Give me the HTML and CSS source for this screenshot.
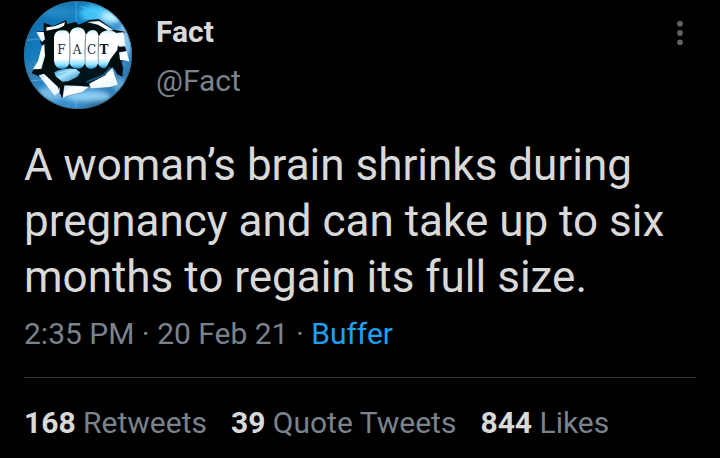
FILE: index.html
```html
<!DOCTYPE html>
<html lang="en">
<head>
<meta charset="utf-8">
<meta name="viewport" content="width=device-width, initial-scale=1">
<title>Fact</title>
<link rel="stylesheet" href="styles.css">
</head>
<body>
<article class="tweet">
  <header class="head">
    <svg class="avatar" viewBox="24 3 324 324" role="img" aria-label="Fact avatar">
      <defs>
        <clipPath id="disc"><circle cx="186" cy="165" r="162"/></clipPath>
        <linearGradient id="sky" x1="0" y1="0" x2="1" y2="1">
          <stop offset="0" stop-color="#0d629c"/>
          <stop offset=".35" stop-color="#1581c4"/>
          <stop offset=".7" stop-color="#3a90cc"/>
          <stop offset="1" stop-color="#15568c"/>
        </linearGradient>
        <linearGradient id="finger" x1="0" y1="0" x2="0" y2="1">
          <stop offset="0" stop-color="#c4f3ff"/>
          <stop offset=".12" stop-color="#ffffff"/>
          <stop offset=".74" stop-color="#ffffff"/>
          <stop offset=".9" stop-color="#8be0ff"/>
          <stop offset="1" stop-color="#1c84cc"/>
        </linearGradient>
        <linearGradient id="thumb" x1="0" y1="0" x2="1" y2="1">
          <stop offset="0" stop-color="#2590d0"/>
          <stop offset=".45" stop-color="#a9e8ff"/>
          <stop offset="1" stop-color="#1b74b5"/>
        </linearGradient>
        <linearGradient id="paper" x1="0" y1="0" x2="1" y2="1">
          <stop offset="0" stop-color="#bfe6f8"/>
          <stop offset=".35" stop-color="#ffffff"/>
          <stop offset="1" stop-color="#e3f6fd"/>
        </linearGradient>
        <filter id="soft" x="-30%" y="-30%" width="160%" height="160%"><feGaussianBlur stdDeviation="8"/></filter>
        <filter id="edge"><feGaussianBlur stdDeviation="1.5"/></filter>
      </defs>
      <g clip-path="url(#disc)">
        <rect x="24" y="3" width="324" height="324" fill="url(#sky)"/>
        <g filter="url(#soft)">
          <ellipse cx="245" cy="40" rx="55" ry="24" fill="#3fc4fa"/>
          <ellipse cx="287" cy="52" rx="32" ry="18" fill="#b8edff"/>
          <ellipse cx="328" cy="115" rx="20" ry="50" fill="#86c3ee"/>
          <ellipse cx="120" cy="35" rx="60" ry="18" fill="#2489c5"/>
          <ellipse cx="110" cy="280" rx="45" ry="22" fill="#78b9e3"/>
          <ellipse cx="215" cy="288" rx="70" ry="16" fill="#8ecff4"/>
          <ellipse cx="310" cy="255" rx="22" ry="22" fill="#5fa9da"/>
          <ellipse cx="265" cy="310" rx="55" ry="10" fill="#1f649b"/>
          <ellipse cx="55" cy="220" rx="25" ry="40" fill="#3182b7"/>
        </g>
        <g fill="none" stroke="#83d5f4" stroke-width="2" opacity=".65">
          <path d="M180 3V65M180 285V327M24 122L85 115M24 245L80 239M190 18L245 38L305 32M218 3L253 52L310 90M245 38L275 3M200 55L253 52"/>
        </g>
        <g filter="url(#edge)">
          <path fill="#000711" d="M83 68L112 78L150 60L153 72L180 66L188 74L220 60L249 58L292 89L326 95L321 117L338 182L316 184L322 207L314 229L302 214L286 199L301 248L218 260L195 276L148 287L138 295L132 260L118 281L72 230L47 220L66 183L82 139L73 128L77 111L61 95L83 94Z"/>
        </g>
        <g fill="url(#paper)">
          <path d="M91 82L116 79L147 66L144 77L129 85L91 92Z"/>
          <path d="M61 96L83 96L87 118L78 126Z"/>
          <path d="M85 132L87 168L76 207L51 208L66 182L78 139Z"/>
          <path d="M68 226L84 221L126 261L130 276L116 287Z"/>
          <path d="M212 66L249 63L292 90L278 93L246 74Z"/>
          <path d="M297 99L323 97L328 139L310 140L298 127Z"/>
          <path d="M309 154L332 153L340 184L312 180Z"/>
        </g>
        <g fill="url(#paper)" stroke="#27516b" stroke-width="1">
          <path d="M145 256L196 258L220 260L199 277L151 289L139 296Z"/>
          <path d="M219 251L262 228L289 203L307 255L280 262L224 266Z"/>
        </g>
        <path fill="#000711" d="M286 188L309 202L319 205L320 230L303 222ZM306 145L325 143L331 153L310 157ZM134 256L142 264L139 294L131 278Z"/>
        <path fill="#01121f" d="M112 199H282L268 226L219 249L167 251L118 230Z" filter="url(#edge)"/>
        <path fill="none" stroke="#1f7fc0" stroke-width="5" opacity=".7" d="M212 246L262 226L284 203" filter="url(#edge)"/>
        <g fill="url(#finger)">
          <path d="M114 111Q117 91 136 91Q160 88 161 108L160 190Q156 206 137 207Q116 204 114 182Z"/>
          <path d="M161 102Q166 82 185 82Q206 83 209 103L207 188Q202 207 183 206Q163 203 160 188Z"/>
          <path d="M209 108Q214 91 231 90Q246 91 248 109L246 190Q240 208 223 207Q208 204 207 188Z"/>
          <path d="M248 111Q254 93 275 91Q304 91 308 116L304 150L284 176L275 194Q269 207 258 204Q247 200 246 187Z"/>
        </g>
        <path fill="none" stroke="#54768a" stroke-width="2" d="M161 108L163 155L160 193M209 106L206 154L208 188M248 112L246 157L247 187"/>
        <path fill="url(#thumb)" d="M115 217Q145 202 179 207L193 217L184 230L157 244L139 245L119 229Z"/>
        <path fill="none" stroke="#bdefff" stroke-width="3" opacity=".7" d="M125 220Q145 213 182 210"/>
        <g class="knuckles">
          <text x="136" y="161">F</text>
          <text x="183" y="161">A</text>
          <text x="227" y="161">C</text>
          <text x="264" y="161" class="last">T</text>
        </g>
      </g>
      <circle cx="186" cy="165" r="161" fill="none" stroke="#43677d" stroke-width="2"/>
    </svg>
    <div class="names">
      <strong class="name">Fact</strong>
      <span class="handle">@Fact</span>
    </div>
    <button class="more" type="button" aria-label="More options">
      <svg class="dots" viewBox="0 0 32 36" aria-hidden="true">
        <circle cx="16" cy="9.7" r="2.9"/><circle cx="16" cy="19" r="2.9"/><circle cx="16" cy="28.3" r="2.9"/>
      </svg>
    </button>
  </header>
  <p class="body">A woman’s brain shrinks during pregnancy and can take up to six months to regain its full size.</p>
  <p class="meta">2:35 PM · 20 Feb 21 · <a class="source" href="#">Buffer</a></p>
  <footer class="stats">
    <span><strong class="count">168</strong> Retweets</span>
    <span><strong class="count">39</strong> Quote Tweets</span>
    <span><strong class="count">844</strong> Likes</span>
  </footer>
</article>
</body>
</html>
```
FILE: styles.css
```css
body {
  margin: 0;
  background: #000;
  color: #d9d9d9;
  font-family: Roboto, "Liberation Sans", sans-serif;
  font-size: 30px;
  line-height: 36px;
}

.tweet {
  padding: 1px 24px 16px;
}

.head {
  display: flex;
  align-items: flex-start;
  gap: 24px;
}

.avatar {
  flex: none;
  width: 108px;
  height: 108px;
}

.knuckles {
  fill: #2a3138;
  font-family: "DejaVu Serif", serif;
  font-size: 36px;
  text-anchor: middle;
}

.last {
  fill: #11161a;
  font-weight: 700;
}

.names {
  display: flex;
  flex: 1;
  flex-direction: column;
  gap: 13px;
  padding-top: 13px;
}

.name,
.count {
  font-weight: 700;
}

.handle,
.meta,
.stats {
  color: #7a828c;
}

.more {
  margin: 13px 0 0;
  padding: 0;
  border: 0;
  background: none;
}

.dots {
  display: block;
  width: 32px;
  height: 36px;
  fill: #5f6366;
}

.body {
  margin: 28px 0 0;
  font-size: 44px;
  line-height: 56px;
}

.meta {
  margin: 11px 0 25px;
}

.source {
  color: #1da1f2;
  text-decoration: none;
}

.stats {
  display: flex;
  flex-wrap: wrap;
  gap: 24px;
  padding-top: 27px;
  border-top: 1px solid #2f3133;
}

.count {
  color: #d9d9d9;
}
```
